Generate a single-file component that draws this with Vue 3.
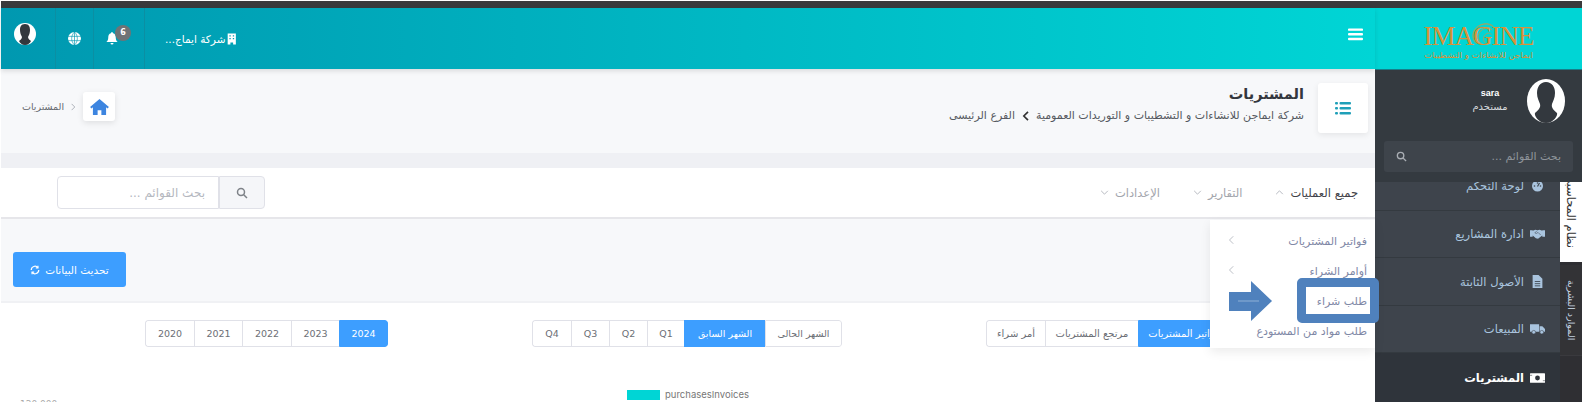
<template>
  <div class="frame" dir="rtl">
    <div class="top-strip"></div>
    <div class="shell">
      <!-- Sidebar -->
      <aside class="sidebar">
        <div class="brand">
          <div class="logo">
            <div class="logo-word" dir="ltr">
              IMAGINE
              <svg class="logo-swirl" viewBox="0 0 40 34" fill="none" stroke="#d8923a">
                <path d="M14 30C4 22 8 5 24 2c6-1 11 1 14 4" stroke-width="1.4" />
                <path d="M21 31c-8-6-7-19 5-23 4-1 8 0 10 3" stroke-width="1.2" />
                <path d="M27 30c-6-5-4-14 4-15 2 0 3 1 4 2" stroke-width="1" />
              </svg>
            </div>
            <div class="logo-sub">ايماجن للانشاءات و التشطيبات</div>
          </div>
        </div>
        <div class="user-box">
          <div class="user-row">
            <svg class="user-pic" viewBox="0 0 38 44">
              <ellipse cx="19" cy="22" rx="19" ry="22" fill="#fff" />
              <path d="M19 3c-6 0-9 5-9 11 0 5 2 8 3 11 1 4-2 6-5 9-1 2 3 10 11 10s12-8 11-10c-3-3-6-5-5-9 1-3 3-6 3-11 0-6-3-11-9-11z" fill="#33383e" />
            </svg>
            <div class="user-text">
              <div class="user-name">sara</div>
              <div class="user-role">مستخدم</div>
            </div>
          </div>
          <div class="side-search">
            <input class="side-input" placeholder="بحث القوائم ..." />
            <svg class="side-search-icon" viewBox="0 0 24 24" fill="none" stroke="#a9aeb4" stroke-width="3">
              <circle cx="10" cy="10" r="7" /><path d="M15 15l7 7" />
            </svg>
          </div>
        </div>
        <div class="side-body">
          <div class="tabs">
            <div class="tab tab-on"><span>نظام المحاسبي</span></div>
            <div class="tab tab-off"><span>الموارد البشرية</span></div>
            <div class="tab-rest"></div>
          </div>
          <nav class="side-menu">
            <div class="side-item first">
              <svg viewBox="0 0 24 24"><circle cx="12" cy="12" r="11" fill="#a9c4de" /><path d="M12 13l4-7" stroke="#3e444c" stroke-width="2.4" /><circle cx="6" cy="12" r="1.6" fill="#3e444c" /><circle cx="18" cy="12" r="1.6" fill="#3e444c" /><circle cx="12" cy="6" r="1.6" fill="#3e444c" /></svg>
              <span>لوحة التحكم</span>
            </div>
            <div class="side-item">
              <svg viewBox="0 0 28 20"><path d="M0 3h5v12H0zM23 3h5v12h-5zM5 4l5-2 4 1 4-1 5 2v9l-2 1-6 5-4-1-6-5z" fill="#a9c4de" /><path d="M13 4l-4 4 3 1 3-2 5 5" stroke="#3e444c" fill="none" /></svg>
              <span>ادارة المشاريع</span>
            </div>
            <div class="side-item tall">
              <svg class="file-icon" viewBox="0 0 18 24"><path d="M0 0h11l7 7v17H0z" fill="#a9c4de" /><path d="M4 12h10M4 16h10M4 20h10" stroke="#3e444c" stroke-width="1.6" /></svg>
              <span>الأصول الثابتة</span>
            </div>
            <div class="side-item">
              <svg viewBox="0 0 28 20"><path d="M0 1h17v14H0zM18 5h5l5 5v5H18z" fill="#a9c4de" /><circle cx="7" cy="16" r="3.4" fill="#a9c4de" stroke="#3e444c" /><circle cx="22" cy="16" r="3.4" fill="#a9c4de" stroke="#3e444c" /></svg>
              <span>المبيعات</span>
            </div>
            <div class="side-item active">
              <svg viewBox="0 0 28 18"><rect width="28" height="18" fill="#fff" rx="1" /><circle cx="14" cy="9" r="4.5" fill="#2f343b" /><path d="M0 4h4M24 14h4" stroke="#2f343b" /></svg>
              <span>المشتريات</span>
            </div>
          </nav>
        </div>
      </aside>

      <!-- Main -->
      <main class="main">
        <header class="topbar">
          <svg class="burger" viewBox="0 0 16 13" fill="#fff">
            <rect width="16" height="2.6" rx="1" /><rect y="5" width="16" height="2.6" rx="1" /><rect y="10" width="16" height="2.6" rx="1" />
          </svg>
          <div class="top-tools">
            <div class="company">
              <svg viewBox="0 0 14 16" width="10" height="12" fill="#fff"><path fill-rule="evenodd" d="M1 0h12v16H9v-3H5v3H1zM3.500 2.500v2h2v-2zm5 0v2h2v-2zm-5 4v2h2v-2zm5 0v2h2v-2z" /></svg>
              <span>شركة ايماج...</span>
            </div>
            <div class="tool tool-bell">
              <svg viewBox="0 0 16 17" width="12" height="13" fill="#fff"><path d="M8 0c1 0 1.500.7 1.500 1.500C12 2.200 13 4.500 13 7c0 3 1 4.500 2.500 6H.5C2 11.500 3 10 3 7c0-2.500 1-4.800 3.500-5.500C6.500.7 7 0 8 0zM6 14.500h4a2 2 0 0 1-4 0z" /></svg>
              <span class="badge">6</span>
            </div>
            <div class="tool tool-globe">
              <svg viewBox="0 0 24 24" width="13" height="13"><circle cx="12" cy="12" r="12" fill="#fff" /><path d="M0 8h24M0 16h24M12 0v24M12 0C5 7 5 17 12 24M12 0c7 7 7 17 0 24" stroke="#0098b0" stroke-width="1.200" fill="none" /></svg>
            </div>
            <div class="tool tool-user">
              <svg viewBox="0 0 22 22" width="22" height="22">
                <circle cx="11" cy="11" r="11" fill="#fff" />
                <path d="M11 1C7 1 6 4 6 7c0 3 1 5 2 7 0 2-2 3-3 4 1 2 3 4 6 4s5-2 6-4c-1-1-3-2-3-4 1-2 2-4 2-7 0-3-1-6-5-6z" fill="#33383e" />
              </svg>
            </div>
          </div>
        </header>

        <section class="page-head">
          <div class="head-right">
            <div class="head-box">
              <svg viewBox="0 0 16 13" width="16" height="13" fill="#1f9fb8">
                <rect width="3" height="2.600" rx="1" /><rect x="4.500" width="11.500" height="2.600" rx="1" />
                <rect y="5" width="3" height="2.600" rx="1" /><rect x="4.500" y="5" width="11.500" height="2.600" rx="1" />
                <rect y="10" width="3" height="2.600" rx="1" /><rect x="4.500" y="10" width="11.500" height="2.600" rx="1" />
              </svg>
            </div>
            <div class="head-text">
              <h1>المشتريات</h1>
              <p>
                <span>شركة ايماجن للانشاءات و التشطيبات و التوريدات العمومية</span>
                <svg viewBox="0 0 8 12" width="7" height="10" fill="none" stroke="#333" stroke-width="2"><path d="M7 1L2 6l5 5" /></svg>
                <span>الفرع الرئيسى</span>
              </p>
            </div>
          </div>
          <div class="crumbs">
            <span class="crumb-text">المشتريات</span>
            <svg viewBox="0 0 8 12" width="5" height="8" fill="none" stroke="#aeb2bb" stroke-width="1.600"><path d="M1 1l5 5-5 5" /></svg>
            <div class="home-box">
              <svg viewBox="0 0 20 17" width="19" height="16" fill="#3d85e0"><path d="M10 0l10 8.500-1.500 1.500L17 8.800V17h-5v-5H8v5H3V8.800L1.500 10 0 8.500z" /></svg>
            </div>
          </div>
        </section>
        <div class="band"></div>

        <section class="menu-bar">
          <div class="menu-links">
            <a v-for="m in menus" :key="m.label" class="menu-link" :class="{ on: m.open }">
              <span>{{ m.label }}</span>
              <svg viewBox="0 0 10 6" width="9" height="5" fill="none" stroke="#a8acb4" stroke-width="1"><path :d="m.open ? 'M1 5l4-4 4 4' : 'M1 1l4 4 4-4'" /></svg>
            </a>
          </div>
          <div class="menu-search">
            <div class="search-btn">
              <svg viewBox="0 0 24 24" width="12" height="12" fill="none" stroke="#7e8288" stroke-width="3"><circle cx="10" cy="10" r="7" /><path d="M15 15l7 7" /></svg>
            </div>
            <input class="search-input" placeholder="بحث القوائم ..." />
          </div>
        </section>

        <section class="action-strip">
          <button class="refresh">
            <span>تحديث البيانات</span>
            <svg viewBox="0 0 24 24" width="10" height="10" fill="none" stroke="#fff" stroke-width="3"><path d="M21 12a9 9 0 0 1-16 5.600M3 12a9 9 0 0 1 16-5.600" /><path d="M19 2v5h-5M5 22v-5h5" /></svg>
          </button>
        </section>

        <section class="filters">
          <div v-for="(group, g) in groups" :key="g" class="seg-group">
            <div
              v-for="s in group"
              :key="s.t"
              class="seg"
              :class="{ sel: s.on }"
              :style="{ width: s.w + 'px' }"
            >{{ s.t }}</div>
          </div>
        </section>

        <section class="chart">
          <div class="legend" dir="ltr">
            <i class="swatch"></i>
            <span>purchasesInvoices</span>
          </div>
          <div class="axis-tick" dir="ltr">120,000</div>
        </section>

        <!-- Dropdown -->
        <div class="dropdown">
          <div v-for="d in dropItems" :key="d.t" class="drop-item">
            <span>{{ d.t }}</span>
            <svg v-if="d.sub" viewBox="0 0 8 12" width="6" height="10" fill="none" stroke="#b4b8c0" stroke-width="1.200"><path d="M7 1L2 6l5 5" /></svg>
          </div>
        </div>
      </main>
    </div>

    <!-- Annotation on the screenshot -->
    <div class="mark-box"></div>
    <svg class="mark-arrow" viewBox="0 0 43 40">
      <path d="M0 11h22V0l21 20-21 20V30H0z" fill="#4f81bd" />
      <path d="M9 20h21" stroke="#8fb0d6" stroke-width="1" />
    </svg>
  </div>
</template>

<script setup>
const menus = [
  { label: 'جميع العمليات', open: true },
  { label: 'التقارير' },
  { label: 'الإعدادات' }
]

const groups = [
  [
    { t: 'فواتير المشتريات', w: 92, on: true },
    { t: 'مرتجع المشتريات', w: 93 },
    { t: 'أمر شراء', w: 59 }
  ],
  [
    { t: 'الشهر الحالى', w: 77 },
    { t: 'الشهر السابق', w: 81, on: true },
    { t: 'Q1', w: 37 },
    { t: 'Q2', w: 38 },
    { t: 'Q3', w: 38 },
    { t: 'Q4', w: 39 }
  ],
  [
    { t: '2024', w: 49, on: true },
    { t: '2023', w: 48 },
    { t: '2022', w: 49 },
    { t: '2021', w: 48 },
    { t: '2020', w: 49 }
  ]
]

const dropItems = [
  { t: 'فواتير المشتريات', sub: true },
  { t: 'أوامر الشراء', sub: true },
  { t: 'طلب شراء' },
  { t: 'طلب مواد من المستودع' }
]
</script>

<style>
html,
body {
  margin: 0;
  background: #fff;
}
</style>

<style scoped>
.frame {
  position: relative;
  width: 1586px;
  height: 402px;
  overflow: hidden;
  box-sizing: border-box;
  padding: 1px 4px 0 1px;
  background: #fff;
  font-family: "DejaVu Sans", sans-serif;
  color: #3f4148;
}

.top-strip {
  height: 7px;
  background: #3a3a3c;
}

.shell {
  display: flex;
  height: 394px;
}

/* sidebar */
.sidebar {
  width: 207px;
  flex: none;
  display: flex;
  flex-direction: column;
  background: #3e444c;
}

.brand {
  height: 62px;
  box-sizing: border-box;
  padding-top: 15px;
  background: #00d5d5;
  border-bottom: 1px solid #15808a;
  display: flex;
  justify-content: center;
}

.logo {
  width: 110px;
  text-align: center;
}

.logo-word {
  position: relative;
  font-family: "Liberation Serif", serif;
  font-size: 27px;
  line-height: 27px;
  letter-spacing: -1px;
  color: #d8923a;
  white-space: nowrap;
}

.logo-swirl {
  position: absolute;
  left: 43px;
  top: -2px;
  width: 28px;
  height: 27px;
}

.logo-sub {
  font-size: 8.500px;
  line-height: 11px;
  color: #d8923a;
  white-space: nowrap;
}

.user-box {
  height: 112px;
  box-sizing: border-box;
  flex: none;
  background: #343a40;
  padding: 9px 9px 0;
  position: relative;
  z-index: 1;
}

.user-row {
  display: flex;
  align-items: center;
  gap: 6px;
  padding-right: 8px;
  height: 44px;
}

.user-pic {
  width: 38px;
  height: 44px;
  flex: none;
}

.user-text {
  width: 62px;
  margin-top: -2px;
  text-align: center;
}

.user-name {
  font-family: "Liberation Sans", sans-serif;
  font-size: 9px;
  font-weight: 700;
  line-height: 13px;
  color: #fff;
}

.user-role {
  font-size: 10px;
  line-height: 13px;
  color: #d6d9dd;
}

.side-search {
  position: relative;
  margin-top: 18px;
  height: 31px;
}

.side-input {
  width: 100%;
  height: 31px;
  box-sizing: border-box;
  border: 0;
  border-radius: 3px;
  padding: 0 12px 0 40px;
  background: #3e444b;
  font-family: inherit;
  font-size: 11px;
  color: #fff;
}

.side-input::placeholder {
  color: #90959b;
  opacity: 1;
}

.side-search-icon {
  position: absolute;
  left: 12px;
  top: 10px;
  width: 11px;
  height: 11px;
}

.side-body {
  flex: 1;
  display: flex;
  min-height: 0;
}

.tabs {
  width: 22px;
  flex: none;
  display: flex;
  flex-direction: column;
  background: #2f2f33;
}

.tab {
  display: flex;
  align-items: center;
  justify-content: center;
  overflow: hidden;
}

.tab span {
  writing-mode: vertical-rl;
  font-size: 11.500px;
  white-space: nowrap;
}

.tab-on {
  height: 80px;
  box-sizing: border-box;
  padding-bottom: 14px;
  background: #fff;
  color: #333;
  align-items: flex-end;
}

.tab-off {
  height: 90px;
  margin-top: 3px;
  background: #333336;
  color: #c4d2e0;
}

.tab-off span {
  font-size: 9.500px;
}

.tab-rest {
  flex: 1;
  background: #2f2f33;
  border-top: 1px solid #3a3a3e;
}

.side-menu {
  flex: 1;
  min-width: 0;
}

.side-item {
  height: 47px;
  box-sizing: border-box;
  border-bottom: 1px solid #343a40;
  display: flex;
  align-items: center;
  gap: 6px;
  padding-right: 15px;
  color: #a9c4de;
  font-size: 11.500px;
  white-space: nowrap;
}

.side-item svg {
  width: 15px;
  height: 12px;
  flex: none;
}

.side-item.tall {
  height: 48px;
}

.side-item.first {
  height: 29px;
  align-items: flex-start;
}

.side-item.first svg {
  margin-top: -2px;
}

.side-item.first span {
  line-height: 8px;
}

.side-item .file-icon {
  width: 11px;
  height: 13px;
  margin: 0 2px;
}

.side-item.active {
  height: 49px;
  border: 0;
  background: #2f343b;
  color: #fff;
  font-weight: 700;
}

/* main */
.main {
  flex: 1;
  min-width: 0;
  position: relative;
  display: flex;
  flex-direction: column;
}

.topbar {
  height: 61px;
  flex: none;
  display: flex;
  align-items: center;
  justify-content: space-between;
  background: linear-gradient(to left, #00d5d5, #0098b0);
  box-shadow: 0 2px 5px rgba(0, 0, 0, 0.12);
  position: relative;
}

.burger {
  width: 15px;
  height: 13px;
  margin-right: 12px;
  margin-bottom: 9px;
}

.top-tools {
  display: flex;
  height: 100%;
  align-items: stretch;
}

.company {
  display: flex;
  align-items: center;
  gap: 2px;
  width: 72px;
  padding-left: 20px;
  color: #fff;
  font-size: 10.500px;
  white-space: nowrap;
}

.tool {
  position: relative;
  display: flex;
  align-items: center;
  justify-content: center;
  box-sizing: border-box;
  border-right: 1px solid #0b8fa3;
}

.tool-bell {
  width: 51px;
  padding-right: 14px;
}

.tool-globe {
  width: 38px;
}

.tool-user {
  width: 55px;
  align-items: flex-start;
  padding: 15px 6px 0 0;
}

.badge {
  position: absolute;
  top: 17px;
  left: 21px;
  width: 16px;
  height: 16px;
  border-radius: 50%;
  background: #6f7376;
  color: #fff;
  font-size: 8px;
  font-weight: 700;
  line-height: 15px;
  text-align: center;
}

.page-head {
  height: 84px;
  flex: none;
  box-sizing: border-box;
  background: #f7f8fa;
  display: flex;
  justify-content: space-between;
  padding: 14px 7px 0 0;
}

.head-right {
  display: flex;
  gap: 14px;
}

.head-box {
  width: 50px;
  height: 50px;
  background: #fff;
  border-radius: 3px;
  box-shadow: 0 2px 6px rgba(0, 0, 0, 0.08);
  display: flex;
  align-items: center;
  justify-content: center;
}

.head-text h1 {
  margin: 2px 0 0;
  font-size: 14.500px;
  line-height: 18px;
  font-weight: 700;
  color: #33363d;
}

.head-text p {
  margin: 5px 0 0;
  display: flex;
  align-items: center;
  gap: 7px;
  font-size: 11px;
  line-height: 16px;
  color: #55585f;
  white-space: nowrap;
}

.crumbs {
  display: flex;
  align-items: center;
  align-self: flex-start;
  gap: 7px;
  margin-top: 9px;
  padding-left: 21px;
  direction: ltr;
}

.crumb-text {
  font-size: 9.500px;
  color: #66696f;
  direction: rtl;
}

.home-box {
  width: 32px;
  height: 29px;
  background: #fff;
  border-radius: 3px;
  box-shadow: 0 2px 6px rgba(0, 0, 0, 0.1);
  display: flex;
  align-items: center;
  justify-content: center;
}

.band {
  height: 15px;
  flex: none;
  background: #eff0f4;
}

.menu-bar {
  height: 51px;
  flex: none;
  box-sizing: border-box;
  background: #fff;
  border-bottom: 2px solid #e6e6ea;
  display: flex;
  align-items: center;
  justify-content: space-between;
  padding: 0 17px 0 56px;
}

.menu-links {
  display: flex;
  gap: 33px;
}

.menu-link {
  display: flex;
  align-items: center;
  gap: 6px;
  color: #a2a5ac;
  font-size: 11.500px;
  white-space: nowrap;
}

.menu-link.on {
  color: #3f4148;
}

.menu-search {
  display: flex;
  height: 33px;
}

.search-btn {
  width: 46px;
  box-sizing: border-box;
  border: 1px solid #e0e1e8;
  border-radius: 0 4px 4px 0;
  background: #f5f6f9;
  display: flex;
  align-items: center;
  justify-content: center;
}

.search-input {
  width: 162px;
  box-sizing: border-box;
  border: 1px solid #e0e1e8;
  border-radius: 4px 0 0 4px;
  padding: 0 13px;
  font-family: inherit;
  font-size: 12px;
}

.search-input::placeholder {
  color: #b5b8bf;
  opacity: 1;
}

.action-strip {
  height: 84px;
  flex: none;
  box-sizing: border-box;
  background: #f7f8fa;
  border-bottom: 2px solid #f0f1f4;
  display: flex;
  justify-content: flex-end;
  align-items: flex-start;
  padding: 33px 0 0 12px;
}

.refresh {
  width: 113px;
  height: 35px;
  border: 0;
  border-radius: 3px;
  background: #3d9eff;
  color: #fff;
  font-family: inherit;
  font-size: 10.500px;
  display: flex;
  align-items: center;
  justify-content: center;
  gap: 5px;
}

.filters {
  flex: none;
  display: flex;
  justify-content: space-between;
  padding: 17px 145px 0 144px;
}

.seg-group {
  display: flex;
  height: 27px;
  border-radius: 3px;
  overflow: hidden;
}

.seg {
  box-sizing: border-box;
  border: 1px solid #e0e1e8;
  border-right-width: 0;
  display: flex;
  align-items: center;
  justify-content: center;
  font-size: 9.500px;
  color: #6c6f76;
  white-space: nowrap;
}

.seg-group:first-child .seg {
  font-size: 10px;
}

.seg:first-child {
  border-right-width: 1px;
  border-radius: 0 3px 3px 0;
}

.seg:last-child {
  border-radius: 3px 0 0 3px;
}

.seg.sel {
  background: #3d9eff;
  border-color: #3d9eff;
  color: #fff;
}

.chart {
  flex: 1;
  position: relative;
}

.legend {
  display: flex;
  align-items: center;
  justify-content: center;
  gap: 5px;
  margin-top: 42px;
  font-family: "Inter", "Liberation Sans", sans-serif;
  font-size: 9.500px;
  color: #777;
}

.swatch {
  width: 33px;
  height: 10px;
  background: #00d5d5;
}

.axis-tick {
  position: absolute;
  left: 19px;
  bottom: -7px;
  font-size: 9px;
  color: #aaa;
}

.dropdown {
  position: absolute;
  right: 0;
  top: 212px;
  width: 165px;
  height: 128px;
  box-sizing: border-box;
  padding-top: 6px;
  background: #fff;
  box-shadow: 0 4px 10px rgba(0, 0, 0, 0.08);
  z-index: 2;
}

.drop-item {
  height: 30px;
  display: flex;
  align-items: center;
  justify-content: space-between;
  padding: 0 8px 0 18px;
  color: #7f88a6;
  font-size: 11px;
  white-space: nowrap;
}

.drop-item svg {
  margin-bottom: 2px;
}

.mark-box {
  position: absolute;
  left: 1297px;
  top: 278px;
  width: 82px;
  height: 45px;
  box-sizing: border-box;
  border: 9px solid #4f81bd;
  border-radius: 5px;
  z-index: 3;
}

.mark-arrow {
  position: absolute;
  left: 1229px;
  top: 281px;
  width: 43px;
  height: 40px;
  z-index: 3;
}
</style>
